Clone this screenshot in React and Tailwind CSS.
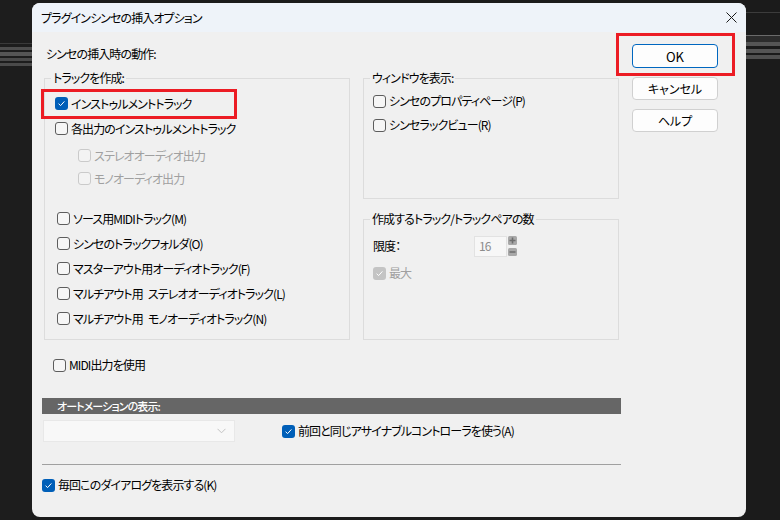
import React from "react";

const Box = ({ checked, disabled }) => {
  if (checked) {
    return (
      <span
        className={`w-[13px] h-[13px] shrink-0 rounded-[3px] flex items-center justify-center ${
          disabled ? "bg-[#c4c4c4]" : "bg-[#005fb8]"
        }`}
      >
        <svg width="9" height="9" viewBox="0 0 9 9">
          <path d="M1.6 4.7 L3.6 6.6 L7.4 2.4" stroke="white" strokeWidth="1" fill="none" />
        </svg>
      </span>
    );
  }
  return (
    <span
      className={`w-[13px] h-[13px] shrink-0 rounded-[3px] border ${
        disabled ? "border-[#cacaca] bg-[#f3f3f3]" : "border-[#5d5d5d] bg-[#f6f6f6]"
      }`}
    />
  );
};

const Check = ({ label, checked, disabled, className = "" }) => (
  <div className={`flex items-center gap-[3px] ${className}`}>
    <Box checked={checked} disabled={disabled} />
    <span className={`whitespace-pre ${disabled ? "text-[#a0a0a0]" : "text-black"}`}>{label}</span>
  </div>
);

const Group = ({ title, className = "", children }) => (
  <div className={`relative border border-[#dcdcdc] ${className}`}>
    <span className="absolute -top-[9px] left-[6px] px-[2px] leading-[16px] bg-[#f0f0f0]">
      {title}
    </span>
    {children}
  </div>
);

const Button = ({ children, primary }) => (
  <button
    className={`w-[86px] rounded-[4px] border leading-none flex items-center justify-center bg-[#fdfdfd] ${
      primary ? "border-[#0067c0] h-[24px] text-[13px]" : "border-[#d0d0d0] h-[23px] text-[12px]"
    }`}
  >
    {children}
  </button>
);

const Stripes = () => (
  <div className="flex flex-col">
    <div className="h-[1px] bg-[#3a3a3a]" />
    <div className="h-[3px]" />
    <div className="h-[3px] bg-[#4e4e4e]" />
    <div className="h-[2px]" />
    <div className="h-[4px] bg-[#555555]" />
    <div className="h-[2px]" />
    <div className="h-[3px] bg-[#4a4a4a]" />
    <div className="h-[2px]" />
    <div className="h-[3px] bg-[#4a4a4a]" />
  </div>
);

export default function App() {
  return (
    <div className="relative w-[780px] h-[520px] bg-[#1b1b1b] flex overflow-hidden text-[12px] tracking-[-0.9px] text-black font-['Noto_Sans_CJK_JP','Noto_Sans',sans-serif] [font-feature-settings:'palt']">
      <div className="w-[32px] shrink-0 pt-[43px] bg-[#1d1d1d]">
        <Stripes />
      </div>

      <div className="w-[714px] shrink-0 mt-[3px] h-[514px] rounded-[8px] bg-[#f0f0f0] overflow-hidden flex flex-col">
        <div className="h-[29px] bg-[#eef3f9] flex items-center justify-between pl-[9px] pr-[9px]">
          <span>プラグインシンセの挿入オプション</span>
          <svg width="11" height="11" viewBox="0 0 11 11">
            <path d="M0.5 0.5 L10.5 10.5 M10.5 0.5 L0.5 10.5" stroke="#1a1a1a" strokeWidth="1" />
          </svg>
        </div>

        <div className="flex pl-[10px]">
          <div className="w-[579px] flex flex-col pt-[14px]">
            <div className="h-[16px] leading-[16px] ml-[4px]">シンセの挿入時の動作:</div>

            <div className="flex mt-[16px] ml-[2px] gap-[13px]">
              <Group title="トラックを作成:" className="w-[306px] h-[262px] pt-[12px]">
                <Check className="h-[25px] pl-[10px]" checked label="インストゥルメントトラック" />
                <Check className="h-[25px] pl-[10px]" label="各出力のインストゥルメントトラック" />
                <Check className="h-[25px] mt-[2px] pl-[33px]" disabled label="ステレオオーディオ出力" />
                <Check className="h-[21px] pl-[33px]" disabled label="モノオーディオ出力" />
                <Check className="h-[25px] mt-[17px] pl-[12px]" label="ソース用MIDIトラック(M)" />
                <Check className="h-[25px] pl-[12px]" label="シンセのトラックフォルダ(O)" />
                <Check className="h-[25px] pl-[12px]" label="マスターアウト用オーディオトラック(F)" />
                <Check className="h-[25px] pl-[12px]" label={"マルチアウト用\u2002ステレオオーディオトラック(L)"} />
                <Check className="h-[25px] pl-[12px]" label={"マルチアウト用\u2002モノオーディオトラック(N)"} />
              </Group>

              <div className="flex flex-col w-[256px]">
                <Group title="ウィンドウを表示:" className="h-[121px] pt-[10px]">
                  <Check className="h-[24px] pl-[9px]" label="シンセのプロパティページ(P)" />
                  <Check className="h-[24px] pl-[9px]" label="シンセラックビュー(R)" />
                </Group>
                <Group title="作成するトラック/トラックペアの数" className="h-[121px] mt-[20px] pt-[16px]">
                  <div className="flex items-center h-[20px] pl-[9px]">
                    <span className="w-[101px]">限度：</span>
                    <div className="w-[33px] h-[21px] border border-[#e2e2e2] bg-[#f7f7f7] flex items-center pl-[4px] text-[#8c8c8c]">
                      16
                    </div>
                    <div className="ml-[1px] flex flex-col gap-[3px]">
                      <svg width="9" height="9" viewBox="0 0 9 9">
                        <rect x="0" y="0" width="9" height="9" rx="1.5" fill="#a8a8a8" />
                        <path d="M4.5 1.5 V7.5 M1.5 4.5 H7.5" stroke="#6e6e6e" strokeWidth="1.6" />
                      </svg>
                      <svg width="9" height="8" viewBox="0 0 9 8">
                        <rect x="0" y="0" width="9" height="8" rx="1.5" fill="#a8a8a8" />
                        <path d="M1.5 4 H7.5" stroke="#6e6e6e" strokeWidth="1.6" />
                      </svg>
                    </div>
                  </div>
                  <Check className="h-[20px] mt-[7px] pl-[9px]" checked disabled label="最大" />
                </Group>
              </div>
            </div>

            <Check className="h-[20px] mt-[15px] ml-[11px]" label="MIDI出力を使用" />

            <div className="h-[16px] mt-[23px] bg-[#666666] flex items-center pl-[15px] text-white text-[11px] font-medium">
              オートメーションの表示:
            </div>

            <div className="flex items-center h-[22px] mt-[6px]">
              <div className="w-[192px] h-[22px] ml-[1px] bg-[#f8f8f8] border border-[#e8e8e8] flex items-center justify-end pr-[8px]">
                <svg width="9" height="6" viewBox="0 0 9 6">
                  <path d="M0.5 0.8 L4.5 4.8 L8.5 0.8" stroke="#c2c2c2" strokeWidth="1" fill="none" />
                </svg>
              </div>
              <Check className="ml-[47px]" checked label="前回と同じアサイナブルコントローラを使う(A)" />
            </div>

            <div className="h-[1px] mt-[22px] bg-[#a0a0a0]" />

            <Check className="h-[20px] mt-[10px]" checked label="毎回このダイアログを表示する(K)" />
          </div>

          <div className="ml-[11px] pt-[12px] flex flex-col gap-[9px] tracking-normal">
            <Button primary>OK</Button>
            <Button>キャンセル</Button>
            <Button>ヘルプ</Button>
          </div>
        </div>
      </div>

      <div className="flex-1 flex flex-col pt-[12px]">
        <div className="h-[1px] bg-[#3c3c3c]" />
        <div className="h-[22px]" />
        <div className="h-[1px] bg-[#6a6a6a]" />
        <div className="h-[6px] bg-[#2c2c2c]" />
        <div className="h-[4px] bg-[#555555]" />
        <div className="h-[3px]" />
        <div className="h-[4px] bg-[#555555]" />
        <div className="h-[2px]" />
        <div className="h-[4px] bg-[#505050]" />
      </div>

      <div className="absolute left-[41px] top-[89px] w-[196px] h-[30px] border-[3px] border-[#ec1c24]" />
      <div className="absolute left-[616px] top-[33px] w-[119px] h-[43px] border-[3px] border-[#ec1c24]" />
    </div>
  );
}
